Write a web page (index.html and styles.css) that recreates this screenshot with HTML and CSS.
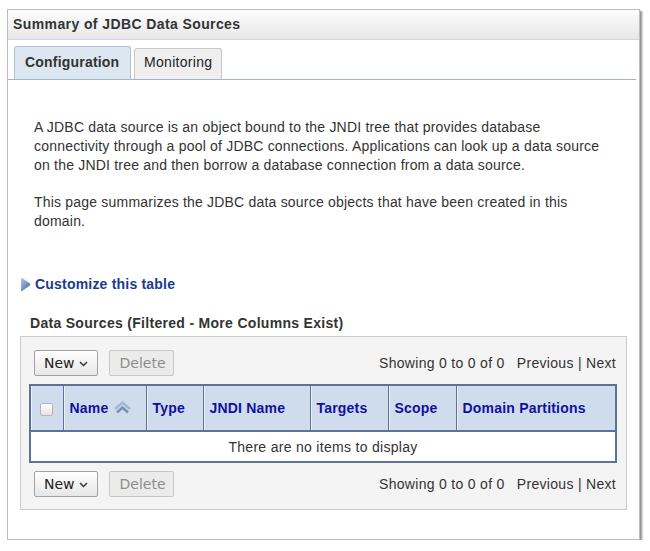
FILE: index.html
```html
<!DOCTYPE html>
<html>

<head>
	<meta charset="UTF-8">
	<meta name="viewport" content="width=device-width, initial-scale=1.0">
	<title>Summary of JDBC Data Sources</title>
	<link rel="stylesheet" href="styles.css">
</head>

<body>
	<div class="panel">
		<div class="panel-head">Summary of JDBC Data Sources</div>
		<div class="tabs">
			<div class="tab active">Configuration</div>
			<div class="tab">Monitoring</div>
		</div>
		<div class="content">
			<p>A JDBC data source is an object bound to the JNDI tree that provides database connectivity through a pool of JDBC connections. Applications can look up a data source on the JNDI tree and then borrow a database connection from a data source.</p>
			<p>This page summarizes the JDBC data source objects that have been created in this domain.</p>
		</div>
		<a class="customize" href="#">
			<svg width="11" height="15" viewBox="0 0 11 15">
				<defs>
					<linearGradient id="tri" x1="0" y1="0" x2="1" y2="1">
						<stop offset="0" stop-color="#b4c8e6" />
						<stop offset="1" stop-color="#3a62a4" />
					</linearGradient>
				</defs>
				<path d="M1 1.8 Q1 0.4 2.2 1.1 L9.8 6.4 Q11 7.5 9.8 8.6 L2.2 13.9 Q1 14.6 1 13.2 Z" fill="url(#tri)" />
			</svg>
			Customize this table
		</a>
		<div class="table-title">Data Sources (Filtered - More Columns Exist)</div>
		<div class="table-box">
			<div class="controls">
				<button class="btn">New <svg width="9" height="6" viewBox="0 0 9 6"><path d="M1 1 L4.5 4.5 L8 1" fill="none" stroke="#333" stroke-width="1.5" /></svg></button>
				<button class="btn" disabled>Delete</button>
				<div class="pager">Showing 0 to 0 of 0 <span class="nav">Previous | Next</span></div>
			</div>
			<table class="grid">
				<thead>
					<tr>
						<th class="col-check"><span class="check"></span></th>
						<th class="col-name">Name
							<svg width="19" height="13" viewBox="0 0 19 13">
								<path d="M2 8 L9.5 1.5 L17 8" fill="none" stroke="#a4b8d2" stroke-width="2.5" />
								<path d="M4 11.5 L9.5 6.5 L15 11.5" fill="none" stroke="#7890b2" stroke-width="2.5" />
							</svg>
						</th>
						<th class="col-type">Type</th>
						<th class="col-jndi">JNDI Name</th>
						<th class="col-targets">Targets</th>
						<th class="col-scope">Scope</th>
						<th>Domain Partitions</th>
					</tr>
				</thead>
				<tbody>
					<tr>
						<td colspan="7" class="empty">There are no items to display</td>
					</tr>
				</tbody>
			</table>
			<div class="controls">
				<button class="btn">New <svg width="9" height="6" viewBox="0 0 9 6"><path d="M1 1 L4.5 4.5 L8 1" fill="none" stroke="#333" stroke-width="1.5" /></svg></button>
				<button class="btn" disabled>Delete</button>
				<div class="pager">Showing 0 to 0 of 0 <span class="nav">Previous | Next</span></div>
			</div>
		</div>
	</div>
</body>

</html>
```

FILE: styles.css
```css
* {
	margin: 0px;
	padding: 0px;
	box-sizing: border-box;
}

body {
	background-color: #ffffff;
	font-family: "Liberation Sans", Arial, sans-serif;
	font-size: 14px;
	letter-spacing: 0.3px;
	color: #333333;
}

.panel {
	margin: 9px 0 0 7px;
	width: 633px;
	height: 531px;
	border: 1px solid #bdbdbd;
	box-shadow: 2px 2px 2px #8e8e8e;
	background-color: #ffffff;
}

.panel-head {
	height: 30px;
	padding: 6px 0 0 5px;
	font-weight: bold;
	letter-spacing: 0.4px;
	color: #333333;
	background: linear-gradient(#fdfdfd, #e6e7e6);
	border-bottom: 1px solid #d8d8d8;
}

.tabs {
	display: flex;
	align-items: flex-end;
	gap: 3px;
	margin: 0 3px 0 0;
	padding: 7px 0 0 6px;
	height: 40px;
	border-bottom: 1px solid #a3b4c7;
}

.tab {
	height: 31px;
	padding: 5px 9px 0 9px;
	background-color: #efefef;
	border: 1px solid #c9c9c9;
	border-bottom: none;
	border-radius: 3px 3px 0 0;
	color: #222222;
}

.tab.active {
	height: 33px;
	padding: 7px 0 0 10px;
	width: 117px;
	font-weight: bold;
	letter-spacing: 0.2px;
	color: #333333;
	background-color: #dce7f1;
	border-color: #b0c4d9;
}

.content {
	padding: 38px 0 0 26px;
	width: 600px;
	line-height: 19px;
	letter-spacing: 0.2px;
}

.content p {
	margin-bottom: 18px;
}

.customize {
	display: flex;
	align-items: center;
	gap: 4px;
	margin: 45px 0 0 12px;
	font-weight: bold;
	letter-spacing: 0.2px;
	color: #1b3a8f;
	text-decoration: none;
}

.table-title {
	margin: 23px 0 0 22px;
	font-weight: bold;
	letter-spacing: 0.3px;
	color: #333333;
}

.table-box {
	margin: 5px 0 0 12px;
	width: 607px;
	height: 174px;
	background-color: #f4f4f4;
	border: 1px solid #cccccc;
	padding: 13px 10px 0 8px;
}

.controls {
	display: flex;
	align-items: center;
	height: 26px;
	padding-left: 5px;
	gap: 11px;
}

.btn {
	height: 26px;
	padding: 0 7px 0 9px;
	min-width: 64px;
	font-family: "DejaVu Sans", sans-serif;
	font-size: 14px;
	letter-spacing: 0;
	color: #222222;
	background: linear-gradient(#ffffff, #e7e7e7);
	border: 1px solid #a2a2a2;
	border-radius: 2px;
	display: flex;
	align-items: center;
	gap: 4px;
}

.btn svg {
	margin-top: 2px;
}

.btn:disabled {
	color: #8d8d8d;
	background: #ebebeb;
	border-color: #c8c8c8;
	justify-content: center;
	width: 65px;
}

.pager {
	margin-left: auto;
	color: #333333;
}

.nav {
	margin-left: 8px;
}

.grid {
	margin: 8px 0 8px 0;
	width: 588px;
	border-collapse: collapse;
	border: 2px solid #5b7496;
}

.grid th {
	height: 46px;
	text-align: left;
	padding: 0 6px;
	background-color: #cfdcee;
	color: #11119c;
	font-weight: bold;
	letter-spacing: 0.2px;
	border-left: 1px solid #5b7496;
	border-bottom: 2px solid #5b7496;
	box-shadow: inset 1px 0 0 #ecf1f8;
	white-space: nowrap;
}

.grid th:first-child {
	border-left: none;
}

.col-check {
	width: 33px;
	text-align: center !important;
}

.col-name {
	width: 83px;
}

.col-name svg {
	vertical-align: -1px;
}

.col-type {
	width: 57px;
}

.col-jndi {
	width: 107px;
}

.col-targets {
	width: 78px;
}

.col-scope {
	width: 68px;
}

.check {
	display: inline-block;
	width: 13px;
	height: 13px;
	border: 1px solid #b5b5b5;
	border-radius: 2px;
	background: linear-gradient(#ffffff, #e4e4e4);
	vertical-align: middle;
}

.grid td.empty {
	height: 31px;
	text-align: center;
	background-color: #ffffff;
	color: #333333;
}
```
